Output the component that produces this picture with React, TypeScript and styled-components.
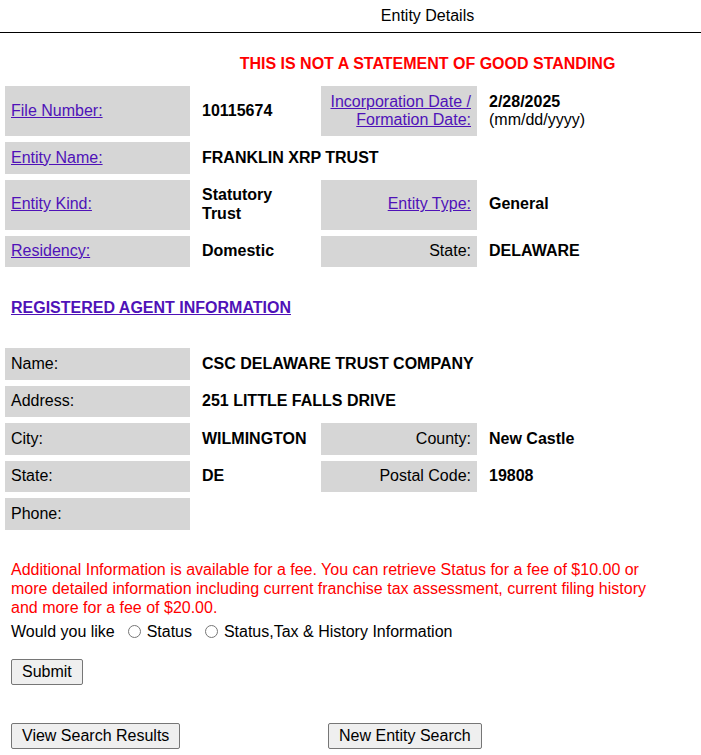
import React from "react";
import styled, { createGlobalStyle } from "styled-components";

const Global = createGlobalStyle`
  html, body { margin: 0; padding: 0; background: #fff; overflow-x: hidden; }
  body { font-family: "Liberation Sans", Arial, sans-serif; font-size: 16px; color: #000; }
`;

const Page = styled.div`
  width: 701px;
  overflow: hidden;
`;

const TitleBar = styled.div`
  width: 855px;
  text-align: center;
  line-height: 18px;
  padding: 7px 0 7px;
`;

const Rule = styled.hr`
  margin: 0;
  border: 0;
  border-top: 1px solid #000;
  width: 701px;
`;

const Warning = styled.div`
  width: 855px;
  text-align: center;
  color: #ff0000;
  font-weight: bold;
  line-height: 18px;
  margin-top: 22px;
`;

const Grid = styled.div<{ $top: number }>`
  display: grid;
  grid-template-columns: 185px 119px 156px 200px;
  column-gap: 6px;
  row-gap: 6px;
  margin: ${(p) => p.$top}px 0 0 5px;
  line-height: 18.5px;
`;

const Label = styled.div<{ $right?: boolean }>`
  background: #d6d6d6;
  padding: 6.5px 6px;
  display: flex;
  align-items: center;
  justify-content: ${(p) => (p.$right ? "flex-end" : "flex-start")};
  text-align: ${(p) => (p.$right ? "right" : "left")};
`;

const Value = styled.div<{ $span?: number }>`
  padding: 6.5px 6px;
  font-weight: bold;
  display: flex;
  align-items: center;
  grid-column: span ${(p) => p.$span ?? 1};
`;

const ValueCol = styled.div`
  padding: 6.5px 6px;
  display: flex;
  flex-direction: column;
  justify-content: center;
`;

const Bold = styled.span`
  font-weight: bold;
`;

const Link = styled.a`
  color: #4f12b8;
  text-decoration: underline;
  cursor: pointer;
`;

const SectionLink = styled(Link)`
  display: inline-block;
  font-weight: bold;
  margin: 32px 0 0 11px;
  line-height: 18px;
`;

const Notice = styled.p`
  color: #ff0000;
  margin: 30px 0 0 11px;
  width: 656px;
  line-height: 19px;
`;

const Choice = styled.div`
  margin: 5px 0 0 11px;
  line-height: 19px;
`;

const Radio = styled.input`
  width: 13px;
  height: 13px;
  margin: 3px 1px 0 9px;
  vertical-align: -1px;
`;

const Btn = styled.button`
  font-family: "Liberation Sans", Arial, sans-serif;
  font-size: 16px;
  line-height: 18px;
  padding: 3px 10px;
  background: #efefef;
  border: 1px solid #767676;
  border-radius: 2px;
  color: #000;
`;

const SubmitRow = styled.div`
  margin: 18px 0 0 11px;
`;

const NavRow = styled.div`
  display: grid;
  grid-template-columns: 317px auto;
  justify-items: start;
  margin: 38px 0 0 11px;
`;

export default function App() {
  return (
    <Page>
      <Global />
      <TitleBar>Entity Details</TitleBar>
      <Rule />
      <Warning>THIS IS NOT A STATEMENT OF GOOD STANDING</Warning>
      <Grid $top={13}>
        <Label><Link>File Number:</Link></Label>
        <Value>10115674</Value>
        <Label $right><Link>Incorporation Date /<br />Formation Date:</Link></Label>
        <ValueCol>
          <Bold>2/28/2025</Bold>
          <span>(mm/dd/yyyy)</span>
        </ValueCol>

        <Label><Link>Entity Name:</Link></Label>
        <Value $span={3}>FRANKLIN XRP TRUST</Value>

        <Label><Link>Entity Kind:</Link></Label>
        <Value>Statutory Trust</Value>
        <Label $right><Link>Entity Type:</Link></Label>
        <Value>General</Value>

        <Label><Link>Residency:</Link></Label>
        <Value>Domestic</Value>
        <Label $right>State:</Label>
        <Value>DELAWARE</Value>
      </Grid>

      <SectionLink>REGISTERED AGENT INFORMATION</SectionLink>

      <Grid $top={31}>
        <Label>Name:</Label>
        <Value $span={3}>CSC DELAWARE TRUST COMPANY</Value>

        <Label>Address:</Label>
        <Value $span={3}>251 LITTLE FALLS DRIVE</Value>

        <Label>City:</Label>
        <Value>WILMINGTON</Value>
        <Label $right>County:</Label>
        <Value>New Castle</Value>

        <Label>State:</Label>
        <Value>DE</Value>
        <Label $right>Postal Code:</Label>
        <Value>19808</Value>

        <Label>Phone:</Label>
        <Value $span={3}></Value>
      </Grid>

      <Notice>
        Additional Information is available for a fee. You can retrieve Status for a fee of $10.00 or more
        detailed information including current franchise tax assessment, current filing history and more
        for a fee of $20.00.
      </Notice>
      <Choice>
        Would you like <Radio type="radio" name="opt" /> Status <Radio type="radio" name="opt" /> Status,Tax &amp; History Information
      </Choice>
      <SubmitRow>
        <Btn>Submit</Btn>
      </SubmitRow>
      <NavRow>
        <Btn>View Search Results</Btn>
        <Btn>New Entity Search</Btn>
      </NavRow>
    </Page>
  );
}
